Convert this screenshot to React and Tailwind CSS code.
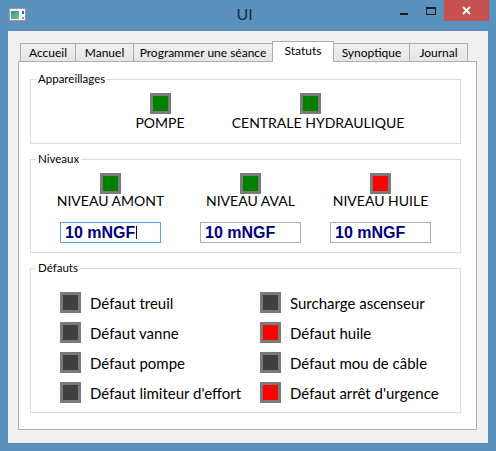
import React from "react";

const TABS = [
    { label: "Accueil", w: "w-[56px]" },
    { label: "Manuel", w: "w-[59px]" },
    { label: "Programmer une séance", w: "w-[140px]" },
    { label: "Statuts", w: "w-[62px]", active: true },
    { label: "Synoptique", w: "w-[77px]" },
    { label: "Journal", w: "w-[59px]" },
];

const COLORS = {
    green: "bg-[#008000]",
    red: "bg-[#ff0000]",
    off: "bg-[#404040]",
};

const DEFAUTS = [
    { label: "Défaut treuil", state: "off" },
    { label: "Surcharge ascenseur", state: "off" },
    { label: "Défaut vanne", state: "off" },
    { label: "Défaut huile", state: "red" },
    { label: "Défaut pompe", state: "off" },
    { label: "Défaut mou de câble", state: "off" },
    { label: "Défaut limiteur d'effort", state: "off" },
    { label: "Défaut arrêt d'urgence", state: "red" },
];

const NIVEAUX = [
    { label: "NIVEAU AMONT", state: "green", focus: true, ml: "" },
    { label: "NIVEAU AVAL", state: "green", ml: "ml-[39px]" },
    { label: "NIVEAU HUILE", state: "red", ml: "ml-[29px]" },
];

function Led({ state, className = "" }) {
    return <div className={`w-[21px] h-[21px] shrink-0 border-[3px] border-[#7a7a7a] ${COLORS[state]} ${className}`} />;
}

function Group({ title, children, className = "" }) {
    return (
        <fieldset className={`border border-[#dcdcdc] ${className}`}>
            <legend className="ml-[5px] px-[2px] text-[11.5px] leading-[16px] text-black">{title}</legend>
            {children}
        </fieldset>
    );
}

function WinIcon() {
    return (
        <svg width="17" height="13" viewBox="0 0 17 13">
            <rect x="0.5" y="0.5" width="16" height="12" fill="#f4f4f4" stroke="#9a9a9a" />
            <defs>
                <linearGradient id="ic" x1="0" y1="0" x2="1" y2="1">
                    <stop offset="0" stopColor="#2f8f8a" />
                    <stop offset="1" stopColor="#7fc08a" />
                </linearGradient>
            </defs>
            <rect x="2" y="3" width="8" height="8" fill="url(#ic)" />
            <rect x="13" y="3" width="2" height="3" fill="#2a6fd0" />
            <rect x="13" y="9" width="2" height="2" fill="#9a9a9a" />
        </svg>
    );
}

export default function App() {
    return (
        <div className="w-[496px] h-[451px] bg-[#5b91bd] flex flex-col font-['Lato','Open_Sans',sans-serif] text-black">
            {/* title bar */}
            <div className="h-[31px] shrink-0 grid grid-cols-[1fr_auto_1fr]">
                <div className="pl-[9px] pt-[8px]">
                    <WinIcon />
                </div>
                <div className="pt-[4px] pr-[7px] text-[16px] leading-[20px] text-[#1e2a3a]">UI</div>
                <div className="flex justify-end items-start pr-[7px]">
                    <div className="w-[26px] h-[21px] flex justify-center pt-[13px]">
                        <div className="w-[8px] h-[2px] bg-[#1b1b1b]" />
                    </div>
                    <div className="w-[27px] h-[21px] flex justify-center pt-[7px]">
                        <div className="w-[10px] h-[8px] border border-t-2 border-[#1b1b1b]" />
                    </div>
                    <div className="w-[45px] h-[21px] bg-[#c75050] flex items-center justify-center">
                        <svg width="9" height="9" viewBox="0 0 9 9">
                            <path d="M1 1 L8 8 M8 1 L1 8" stroke="#ffffff" strokeWidth="2" />
                        </svg>
                    </div>
                </div>
            </div>

            {/* client area */}
            <div className="flex-1 mx-[8px] mb-[8px] bg-[#f0f0f0] pt-[10px] pl-[10px] pr-[11px] pb-[13px] flex flex-col">
                <div className="h-[20px] flex items-end pl-[2px] shrink-0">
                    {TABS.map((t, i) =>
                        t.active ? (
                            <div
                                key={t.label}
                                className={`${t.w} ${i ? "-ml-px" : ""} h-[21px] -mb-px relative z-10 bg-white border border-b-0 border-[#acacac] flex items-center justify-center text-[12px] leading-[16px] pb-[2px]`}
                            >
                                {t.label}
                            </div>
                        ) : (
                            <div
                                key={t.label}
                                className={`${t.w} ${i ? "-ml-px" : ""} h-[18px] bg-gradient-to-b from-[#f0f0f0] to-[#e5e5e5] border border-b-0 border-[#acacac] flex items-center justify-center text-[12px] leading-[16px]`}
                            >
                                {t.label}
                            </div>
                        )
                    )}
                </div>

                <div className="flex-1 bg-white border border-[#adadad] pt-[9px] pl-[11px] pr-[15px] flex flex-col">
                    <Group title="Appareillages">
                        <div className="flex items-start pt-[6px] pb-[11px] pl-[99px] text-[14px] leading-[18px]">
                            <div className="w-[60px] flex flex-col items-center">
                                <Led state="green" />
                                <div className="whitespace-nowrap">POMPE</div>
                            </div>
                            <div className="w-[176px] ml-[40px] flex flex-col items-center">
                                <Led state="green" className="self-start ml-[70px]" />
                                <div className="whitespace-nowrap">CENTRALE HYDRAULIQUE</div>
                            </div>
                        </div>
                    </Group>

                    <Group title="Niveaux" className="mt-[7px]">
                        <div className="flex items-start pt-[6px] pb-[9px] pl-[29px]">
                            {NIVEAUX.map((n) => (
                                <div key={n.label} className={`w-[101px] ${n.ml} flex flex-col items-center`}>
                                    <Led state={n.state} />
                                    <div className="whitespace-nowrap text-[14px] leading-[16px] mt-[-1px]">{n.label}</div>
                                    <div
                                        className={`mt-[13px] w-[101px] h-[21px] border ${n.focus ? "border-[#569de5]" : "border-[#abadb3]"} flex items-center pl-[4px] font-['Liberation_Sans',Arial,sans-serif] font-bold text-[16px] leading-[18px] text-[#000080]`}
                                    >
                                        10 mNGF
                                        {n.focus && <span className="ml-px w-px h-[13px] bg-[#000040]" />}
                                    </div>
                                </div>
                            ))}
                        </div>
                    </Group>

                    <Group title="Défauts" className="mt-[7px]">
                        <div className="grid grid-cols-[200px_auto] gap-y-[9px] pt-[16px] pb-[9px] pl-[29px] text-[15px] leading-[18px]">
                            {DEFAUTS.map((d) => (
                                <div key={d.label} className="flex items-center gap-[9px]">
                                    <Led state={d.state} />
                                    <span className="whitespace-nowrap">{d.label}</span>
                                </div>
                            ))}
                        </div>
                    </Group>
                </div>
            </div>
        </div>
    );
}
